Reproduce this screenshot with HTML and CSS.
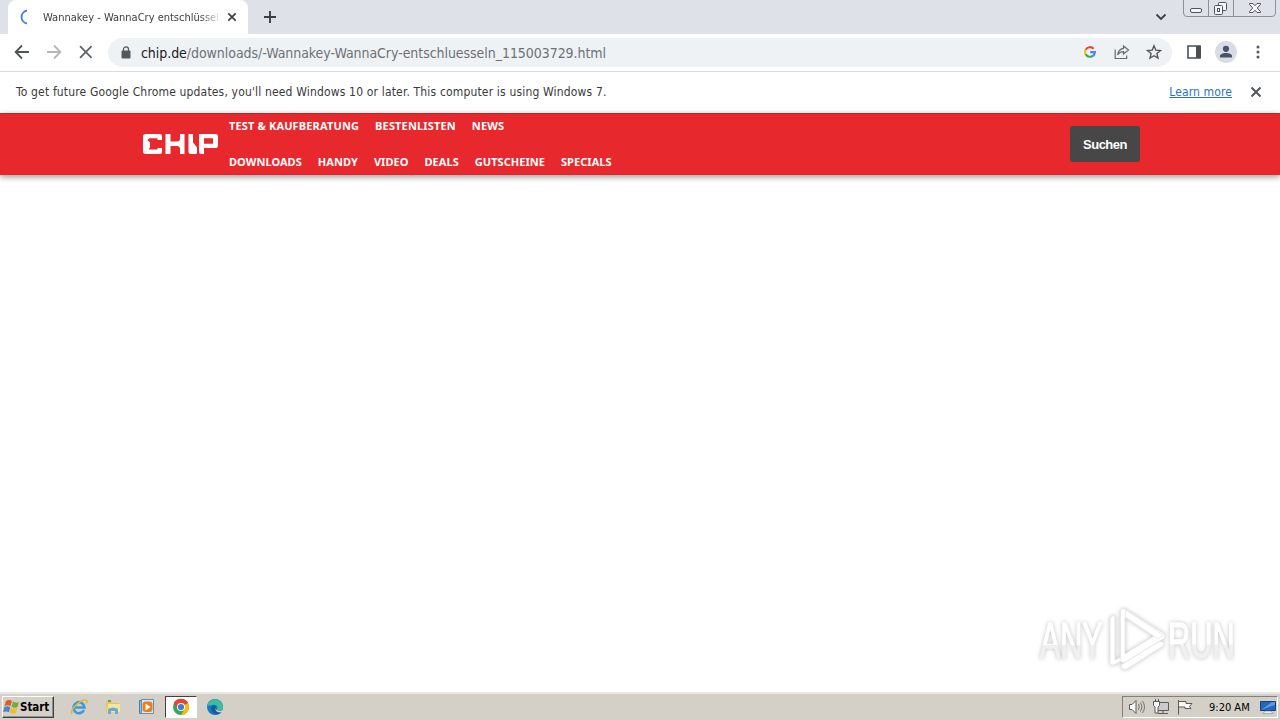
FILE: index.html
```html
<!DOCTYPE html>
<html lang="de">
<head>
<meta charset="utf-8">
<title>Wannakey - WannaCry entschlüsseln</title>
<link rel="stylesheet" href="styles.css">
</head>
<body>
<div class="screen">
  <div class="tabstrip">
    <div class="tab">
      <svg class="spinner" width="16" height="16" viewBox="0 0 16 16"><path d="M9 1.500A6.600 6.600 0 0 0 9 14.500" fill="none" stroke="#4580d8" stroke-width="1.900"/></svg>
      <span class="tab-title">Wannakey - WannaCry entschlüssel</span>
      <svg class="tab-close" width="10" height="10" viewBox="0 0 10 10"><path d="M1.300 1.300l7.400 7.400M8.700 1.300L1.300 8.700" stroke="#3c4043" stroke-width="1.700"/></svg>
    </div>
    <svg class="newtab" width="14" height="14" viewBox="0 0 14 14"><path d="M7 1v12M1 7h12" stroke="#3c4043" stroke-width="1.900"/></svg>
    <svg class="tabsearch" width="12" height="8" viewBox="0 0 12 8"><path d="M1.500 1.500L6 6l4.500-4.500" fill="none" stroke="#3c4043" stroke-width="1.800"/></svg>
    <svg class="caption" width="94" height="18" viewBox="0 0 94 18">
      <path d="M.5 0v13q0 3.500 3.500 3.500h85q3.500 0 3.500-3.500V0M25.500 0v16M50.500 0v16" fill="none" stroke="#8b9099"/>
      <g fill="#f2f4f8" stroke="#50545c"><rect x="7.500" y="8.500" width="11" height="4" rx="1.500"/><rect x="35.500" y="2.500" width="8" height="8" rx="1"/><rect x="31.500" y="5.500" width="8" height="9" rx="1"/><rect x="34.500" y="8.500" width="2" height="3"/><path d="M66.500 3.500h3.500l2 2.200 2-2.200h3.500v1l-3.200 3.500 3.200 3.500v1H74l-2-2.200-2 2.200h-3.500v-1l3.200-3.500-3.200-3.500z"/></g>
    </svg>
  </div>
  <div class="toolbar">
    <svg class="nav-icons" width="84" height="18" viewBox="0 0 84 18" fill="none" stroke-width="1.800">
      <path d="M15 9H2M8 2.500L1.600 9 8 15.500" stroke="#505357"/>
      <path d="M33 9h13M40 2.500L46.400 9 40 15.500" stroke="#b4b6b9"/>
      <path d="M66 3.200l11.600 11.600M77.600 3.200L66 14.800" stroke="#5f6368"/>
    </svg>
    <div class="omnibox">
      <svg class="lock" width="10" height="13" viewBox="0 0 10 13"><rect x=".5" y="4.500" width="9" height="8" rx="1" fill="#55595e"/><path d="M2.500 5V3.400a2.500 2.500 0 0 1 5 0V5" fill="none" stroke="#55595e" stroke-width="1.300"/></svg>
      <span class="url"><span class="host">chip.de</span>/downloads/-Wannakey-WannaCry-entschluesseln_115003729.html</span>
      <svg class="google" width="12" height="12" viewBox="0 0 12 12" fill="none" stroke-width="2.100"><path d="M9.600 2.700A4.900 4.900 0 0 0 1.700 3.700" stroke="#ea4335"/><path d="M1.700 3.600a4.900 4.900 0 0 0 0 4.800" stroke="#fbbc05"/><path d="M1.700 8.200a4.900 4.900 0 0 0 7.600 1.300" stroke="#34a853"/><path d="M9.200 9.600A4.900 4.900 0 0 0 10.900 6.100H6.200" stroke="#4285f4"/></svg>
      <svg class="share" width="16" height="16" viewBox="0 0 16 16" fill="none" stroke="#65696e" stroke-width="1.200"><path d="M1.200 5.500v9h11.500v-3"/><path d="M9.500 2l5 4-5 4V7.700C7 7.700 5 8.600 3.700 11c.3-3.600 2.200-6 5.800-6.600z"/></svg>
      <svg class="star" width="16" height="16" viewBox="0 0 16 16"><path d="M8 1.800l1.800 4.300 4.700.4-3.600 3 1.100 4.600L8 11.700l-4 2.400 1.100-4.600-3.600-3 4.700-.4z" fill="none" stroke="#54585d" stroke-width="1.400"/></svg>
    </div>
    <svg class="panel" width="14" height="14" viewBox="0 0 14 14"><path d="M1 1h12v12H1z" fill="none" stroke="#4b4f54" stroke-width="1.600"/><path d="M9 1h5v12H9z" fill="#4b4f54"/></svg>
    <svg class="avatar" width="22" height="22" viewBox="0 0 22 22"><circle cx="11" cy="11" r="11" fill="#d9dde3"/><circle cx="11" cy="7.800" r="3.100" fill="#46536a"/><path d="M5 16.500v-1.600c0-3.900 12-3.900 12 0v1.600z" fill="#46536a"/></svg>
    <svg class="dots" width="4" height="14" viewBox="0 0 4 14" fill="#54585d"><circle cx="2" cy="2" r="1.500"/><circle cx="2" cy="7" r="1.500"/><circle cx="2" cy="12" r="1.500"/></svg>
  </div>
  <div class="infobar">
    <span class="notice">To get future Google Chrome updates, you'll need Windows 10 or later. This computer is using Windows 7.</span>
    <a class="learn">Learn more</a>
    <svg class="dismiss" width="12" height="12" viewBox="0 0 12 12"><path d="M1.500 1.500l9 9M10.500 1.500l-9 9" stroke="#505357" stroke-width="1.900"/></svg>
  </div>
  <main class="page">
    <header class="site-header">
      <svg class="chip-logo" width="76" height="21" viewBox="0 0 76 21" fill="#fff">
        <path d="M2.500 0H17q2 0 2 2v4h-4.500V4.300H6.500L4.300 6 7 8.500v5L5.500 15.500h9V14H19v4q0 2-2 2H2.500Q0 20 0 17.500v-15Q0 0 2.500 0z"/>
        <path d="M22.500 0h5v7.500H34q3 0 3-3V0h4.500v20H37v-5q0-3-3-3h-6.500v8h-5z"/>
        <path d="M45.500 0H50v8.500l4 5V18.500q0 1.500-1.500 1.500h-4.500q-2.500 0-2.500-2.500z"/>
        <path fill-rule="evenodd" d="M56 0h16.500Q75 0 75 2.500v9q0 2.500-2.500 2.500H61v6h-2.500Q56 20 56 17.500zM61 4.300v5.400h9V4.300z"/>
      </svg>
      <nav class="menu">
        <div class="menu-row menu-top"><a>TEST &amp; KAUFBERATUNG</a><a>BESTENLISTEN</a><a>NEWS</a></div>
        <div class="menu-row"><a>DOWNLOADS</a><a>HANDY</a><a>VIDEO</a><a>DEALS</a><a>GUTSCHEINE</a><a>SPECIALS</a></div>
      </nav>
      <button class="search">Suchen</button>
    </header>
    <svg class="watermark" width="210" height="70" viewBox="0 0 210 70">
      <defs><linearGradient id="fade" x1="0" y1="0" x2="0" y2="1"><stop offset=".56" stop-color="#fff"/><stop offset=".58" stop-color="#f0f0f0"/></linearGradient></defs>
      <g class="mark-text"><text transform="translate(8 53) scale(.61 1)">ANY</text><text transform="translate(136 53) scale(.615 1)">RUN</text></g>
      <g class="mark-play"><path d="M78 58V14q0-3 5-4v45l6-3v4l-7 4q-4 1-4-2z"/><path fill-rule="evenodd" d="M88.500 51V7q0-5 5-2.500L131 28q4 3 0 6l-39 24-4-2zM93 12v37l6-4 23-14z"/><path d="M93 12l33 22 5-4L94 5z"/><path d="M89 60l39-24 4 2-1 3-36 23q-5 2-6-4z"/></g>
    </svg>
  </main>
  <footer class="taskbar">
    <div class="start"><svg width="17" height="16" viewBox="0 0 17 16"><path d="M3 2q3-2 6 0L7.500 7q-3-1.500-6 0z" fill="#e65727"/><path d="M10 2.500q3 2 6 .2L14.500 8q-3 1.500-6-.3z" fill="#72ad3e"/><path d="M1.300 8.200q3-1.700 6 0L6 13.200q-3-1.600-6 0z" fill="#4389cc"/><path d="M8.200 8.700q3 1.700 6 .2L12.800 14q-3 1.500-6-.3z" fill="#f4b92e"/></svg><span>Start</span></div>
    <div class="launch">
      <svg width="18" height="18" viewBox="0 0 18 18"><path d="M4 9.500h10.500A5.500 5.500 0 1 0 14 12" fill="none" stroke="#3a9bdc" stroke-width="2.600"/><path d="M2 16C-1 12 12 0 16.500 2.300c1 .8.500 2-.3 3" fill="none" stroke="#e2b63c" stroke-width="1.500"/></svg>
      <svg width="18" height="18" viewBox="0 0 18 18"><path d="M2 3h5l1 2h7v9H2z" fill="#e7c45f"/><path d="M4 6h12v8H3z" fill="#f8e49b"/><path d="M4 16v-5q5-3 10 0v5h-3v-3H7v3z" fill="#68acd5"/><path d="M4 2h3v2H4z" fill="#55a955"/></svg>
      <svg width="18" height="18" viewBox="0 0 18 18"><path d="M1.500 2.500h12v13h-12z" fill="#8dbce0" stroke="#4581ae"/><path d="M3.500 1.500h12v14h-12z" fill="#d9eafa" stroke="#5792c0"/><rect x="4.500" y="3.500" width="10" height="10.500" rx="3" fill="#f27d16"/><path d="M7.500 5.500v7l5-3.500z" fill="#fff"/></svg>
      <div class="active-app"><svg width="18" height="18" viewBox="0 0 18 18"><circle cx="9" cy="9" r="8" fill="#34a853"/><path d="M9 9L2.070 5A8 8 0 0 1 15.930 5z" fill="#ea4335"/><path d="M9 9l6.930-4A8 8 0 0 1 9 17l3.500-6z" fill="#fbbc05"/><path d="M9 5h7a8 8 0 0 0-14-.1l3.500 6z" fill="#ea4335"/><circle cx="9" cy="9" r="4" fill="#fff"/><circle cx="9" cy="9" r="3.100" fill="#397de0"/></svg></div>
      <svg width="18" height="18" viewBox="0 0 18 18"><circle cx="9" cy="9" r="8" fill="#1479c9"/><path d="M1.200 7.500A8 8 0 0 1 17 9c0 4-5 4.500-6.500 3 2-2 1-5-2-5S3 8 1.200 7.500z" fill="#3dbd9d"/><path d="M8 6.500c-5 2-3 9 3 9.800 2.500 0 4-1 5-3-4 1.500-8-1-6-4.500z" fill="#155a9c"/><path d="M9.800 8.500c-1.500 3 2 5.500 6.500 3.800l1.200 1.500V18h-3c1-2 1.500-3 1.500-4-4 1.700-8-1.500-6.200-5.500z" fill="#d4d0c8"/></svg>
    </div>
    <div class="tray">
      <svg class="tray-icons" width="66" height="18" viewBox="0 0 66 18" fill="#f8f8f6" stroke="#5b5b59">
        <path d="M1.500 6.500H4l4-4v13l-4-4H1.500z"/><path d="M10.500 6q1.500 3 0 6M12.500 4.500q3 4.500 0 9M14.500 3q4 6 0 12" fill="none" stroke="#77777a"/>
        <path d="M29.500 4.500h11v8h-11z" fill="#c9cbca"/><path d="M30 15.500h10M35 12.500v3"/><path d="M25.500 3.500h6v4l-1.500 1.500v6h-3V9l-1.500-1.500zM27.500 1v2.500M30.500 1v2.500"/>
        <path d="M50.500 2v14.500M51 3.500h7v2h6l-2.500 3 1.500 2h-6v-1.500h-6"/>
      </svg>
      <span class="clock">9:20 AM</span>
      <svg class="desktop-icon" width="16" height="16" viewBox="0 0 16 16"><path d="M.5 2.500h15v9H.5z" fill="#2564bd" stroke="#164284"/><path d="M1 11L12 3h3v3z" fill="#5c98df"/><path d="M5 12h6l2 2.500H3z" fill="#e9edf0" stroke="#777" stroke-width=".5"/></svg>
    </div>
  </footer>
</div>
</body>
</html>
```
FILE: styles.css
```css
* { box-sizing: border-box; }
body { margin: 0; font-family: "DejaVu Sans Condensed", "DejaVu Sans", sans-serif; font-stretch: condensed; }
svg { display: block; flex: none; }
.screen { width: 1280px; height: 720px; overflow: hidden; display: flex; flex-direction: column; background: #fff; }
.tabstrip { height: 34px; flex: none; display: flex; align-items: center; background: #dee1e8; }
.tab { width: 240px; height: 34px; margin-left: 8px; padding-left: 10px; display: flex; align-items: center; background: #fff; border-radius: 8px 8px 0 0; }
.tab-title { width: 177px; margin: 0 7px 0 9px; white-space: nowrap; font-size: 11px; color: #3c4043; -webkit-mask-image: linear-gradient(90deg, #000 157px, transparent 179px); mask-image: linear-gradient(90deg, #000 157px, transparent 179px); }
.newtab { margin-left: 15px; }
.tabsearch { margin-left: auto; }
.caption { align-self: flex-start; margin: 0 3px 0 16px; }
.toolbar { height: 38px; flex: none; display: flex; align-items: center; border-bottom: 1px solid #d9dadc; padding: 0 0 1px 14px; }
.nav-icons { margin-right: 10px; }
.omnibox { width: 1064px; height: 29px; border-radius: 15px; padding-left: 13px; display: flex; align-items: center; background: #eff2f5; }
.url { margin-left: 10px; padding-top: 1px; font-size: 14px; letter-spacing: -.05px; color: #6c7176; white-space: nowrap; }
.host { color: #202124; }
.google { margin-left: auto; }
.share { margin-left: 18px; }
.star { margin: 0 10px 0 16px; }
.panel { margin-left: 15px; }
.avatar { margin-left: 14px; }
.dots { margin-left: 19px; }
.infobar { height: 41px; flex: none; display: flex; align-items: center; padding: 0 0 2px 16px; font-size: 12px; color: #3a3a3a; }
.notice { white-space: nowrap; letter-spacing: .165px; }
.learn { margin-left: auto; color: #2875bd; text-decoration: underline; letter-spacing: .12px; }
.dismiss { margin: 0 18px 0 18px; }
.page { flex: 1; display: flex; flex-direction: column; background: #fff; min-height: 0; }
.site-header { height: 62px; padding-left: 143px; display: flex; align-items: center; background: #e7282d; border-top: 1px solid #a92e30; box-shadow: 0 2px 6px rgba(0,0,0,.4); }
.menu { align-self: stretch; margin-left: 10px; display: flex; flex-direction: column; justify-content: space-between; padding: 4px 0 5px; }
.menu-row { display: flex; gap: 16px; font: 700 11px/16px "Noto Sans", sans-serif; letter-spacing: .05px; color: #fff; white-space: nowrap; }
.menu-top { letter-spacing: .15px; }
.search { margin: 0 140px 2px auto; width: 70px; height: 36px; border: 0; border-radius: 3px; background: #474747; color: #fff; font: 700 13px "Liberation Sans", sans-serif; letter-spacing: -.5px; padding: 2px 0 0; }
.watermark { overflow: visible; margin: auto 38px 17px auto; filter: drop-shadow(0 0 2px rgba(0,0,0,.24)); }
.mark-text { font: 400 50px "Liberation Sans", sans-serif; fill: url(#fade); stroke: url(#fade); stroke-width: 1.4px; }
.mark-play { fill: #fff; stroke: #e6e6e6; stroke-width: .8px; }
.taskbar { height: 28px; flex: none; display: flex; align-items: center; background: #d4d0c8; border-top: 2px solid #e9e7e3; padding: 0 0 1px 2px; }
.start { width: 52px; height: 22px; margin-top: 1px; display: flex; align-items: center; border: 1px solid; border-color: #fff #404040 #404040 #fff; box-shadow: inset -1px -1px #909090; font-size: 11.5px; letter-spacing: -.05px; font-weight: 700; color: #000; }
.launch { margin-left: 16px; display: flex; align-items: center; gap: 16px; margin-top: 1px; }
.active-app { width: 32px; height: 22px; margin: 0 -7px; display: flex; align-items: center; justify-content: center; background: #fff; border: 1px solid; border-color: #404040 #fff #fff #404040; }
.tray { width: 156px; height: 22px; margin: 1px 2px 0 auto; display: flex; align-items: center; border: 1px solid; border-color: #808080 #fff #fff #808080; padding-left: 5px; font-size: 11px; color: #000; }
.clock { margin-left: 15px; white-space: nowrap; }
.desktop-icon { margin: 0 1px 0 auto; }
```
